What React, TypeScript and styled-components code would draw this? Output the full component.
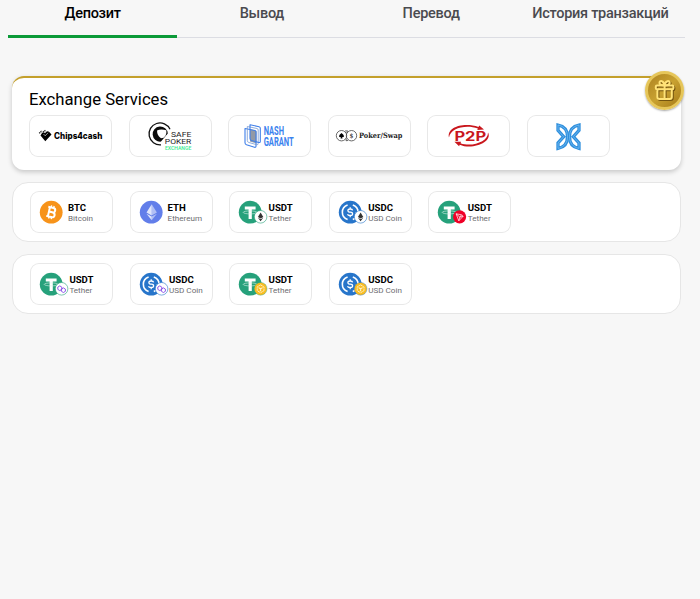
import React from "react";
import styled, { createGlobalStyle } from "styled-components";

const GlobalStyle = createGlobalStyle`
  *, *::before, *::after { box-sizing: border-box; }
  body { margin: 0; background: #f7f7f7; font-family: Roboto, sans-serif; color: #000; }
`;

const Page = styled.main`
  min-height: 599px;
  overflow: hidden;
`;

const Tabs = styled.nav`
  display: grid;
  grid-template-columns: repeat(4, 1fr);
  width: 677px;
  height: 38px;
  margin-left: 8px;
  box-shadow: inset 0 -1px #dcdde3;
`;

const Tab = styled.button<{ $active?: boolean }>`
  display: flex;
  justify-content: center;
  padding: 4px 0 0;
  border: 0;
  border-bottom: 3px solid ${(p) => (p.$active ? "#0b9a38" : "transparent")};
  background: none;
  color: ${(p) => (p.$active ? "#000" : "#4a4a4f")};
  font: 500 14.5px/20px Roboto, sans-serif;
  letter-spacing: -0.27px;
  white-space: nowrap;
`;

const Cards = styled.div`
  display: flex;
  flex-direction: column;
  width: 669px;
  margin: 38px 0 0 12px;
`;

const ExchangeCard = styled.section`
  position: relative;
  height: 94px;
  padding: 12px 17px 0;
  border-top: 2px solid #c4a02c;
  border-radius: 12px;
  background: #fff;
  box-shadow: 0 2px 5px rgba(0, 0, 0, 0.2);
`;

const Title = styled.h2`
  height: 20px;
  margin: 0 0 5px;
  font: 400 16.7px/20px Roboto, sans-serif;
`;

const CoinCard = styled.section`
  height: 60px;
  margin-top: 12px;
  padding: 8px 17px 0;
  border: 1px solid #e6e6e6;
  border-radius: 16px;
  background: #fff;
`;

const Row = styled.div`
  display: flex;
  gap: 16.6px;
`;

const Tile = styled.div`
  display: flex;
  flex: none;
  width: 83px;
  height: 42px;
  border-radius: 9px;
  background: #fff;
  box-shadow: inset 0 0 0 1px #e8e8e8;
`;

const Logo = styled.svg`
  display: block;
  width: 83px;
  height: 42px;
`;

const CoinIcon = styled.svg`
  flex: none;
  width: 39px;
  height: 42px;
`;

const CoinText = styled.div<{ $shift: number }>`
  display: flex;
  flex-direction: column;
  padding-top: 11px;
  margin-left: ${(p) => p.$shift}px;
  white-space: nowrap;
`;

const Symbol = styled.strong`
  font: 700 9.6px/11px Roboto, sans-serif;
`;

const CoinName = styled.span`
  color: #6c6c70;
  font: 400 8.1px/10px Roboto, sans-serif;
`;

const GiftBadge = styled.div`
  position: absolute;
  top: -7px;
  right: -3px;
  display: grid;
  place-items: center;
  width: 39px;
  height: 39px;
  border: 3px solid #e6c65a;
  border-radius: 50%;
  background: linear-gradient(135deg, #ae8320, #c8a131 50%, #a67a18);
  box-shadow: 0 1px 2px rgba(0, 0, 0, 0.35);
`;

const Gift = () => (
  <svg width="22" height="23" viewBox="0 0 22 23" fill="none" strokeLinejoin="round">
    {[{ c: "#74540f", t: "translate(1 1)" }, { c: "#ffe378", t: "" }].map((l) => (
      <g key={l.c} stroke={l.c} strokeWidth="2" transform={l.t}>
        <rect x="1.800" y="6.500" width="17.600" height="3.800" rx="1.200" />
        <path d="M3.400 10.500V18q0 2 2 2h10.400q2 0 2-2v-7.500M10.600 6.500V20" />
        <path d="M10.600 6.300Q5.500 6.300 5.500 3.900C5.500 1.200 9.700 1.200 10.600 6.300 11.500 1.200 15.700 1.200 15.700 3.900 15.700 6.300 10.600 6.300 10.600 6.300Z" />
      </g>
    ))}
  </svg>
);

const Chips4cash = () => (
  <Logo viewBox="0 0 83 42">
    <path d="M11.500 20.400 13 18q1.500-1.500 3 .2 2-3.200 4.300-1.200l2.200 2.500-6.200 6.800Z" />
    <path d="m10.200 18.200 2.800-2.300M14 17l2.600-1.700" stroke="#222" strokeWidth="1.400" strokeDasharray="1.200 .5" />
    <path d="m14.500 19 1.700 1.800 2.800-3" fill="none" stroke="#fff" strokeWidth=".6" />
    <text x="25" y="24.200" fontFamily="Inter" fontWeight="800" fontSize="8.600" textLength="48.300" lengthAdjust="spacingAndGlyphs">Chips4cash</text>
  </Logo>
);

const SafePoker = () => (
  <Logo viewBox="0 0 83 42">
    <path d="M32 29.900A11 11 0 1 1 41 14.300" fill="none" stroke="#111" strokeWidth="1.300" />
    <path d="M32 26.600A7.600 7.600 0 1 1 38.800 18.500" fill="#0b0b0b" />
    <path d="M28 15.500q4-2 9.300-.2.600 3-.8 5.500-1.500 2.500-4.500 2.500Q28 20.500 28 15.500Z" fill="#fff" />
    <g fill="#222" fontFamily="Roboto" fontWeight="400" fontSize="7.900">
      <text x="42" y="22" textLength="20.300" lengthAdjust="spacingAndGlyphs">SAFE</text>
      <text x="35.800" y="29.300" textLength="26.500" lengthAdjust="spacingAndGlyphs">POKER</text>
    </g>
    <text x="36" y="34.500" fill="#35ec8d" fontFamily="Roboto" fontWeight="500" fontSize="5.400" textLength="26.300" lengthAdjust="spacingAndGlyphs">EXCHANGE</text>
  </Logo>
);

const NashGarant = () => (
  <Logo viewBox="0 0 83 42">
    <path d="M22 14 28.500 16v12.500l-6.500-2Z" fill="#9299a5" />
    <g fill="none" stroke="#3f7fe9" strokeWidth="1.100" strokeLinejoin="round">
      <path d="M17 13.500 27 15.500q1 .3 1 1.300V31q0 1.600-1.500 1.300l-8-2.500Q17 29.200 17 27.700Z" />
      <path d="M19.300 11.500 29 13.500q1.200.3 1.200 1.500v13.500q0 1.500-1.500 1.200l-7.900-2.200q-1.500-.5-1.500-2Z" stroke="#7598d2" strokeWidth=".8" />
      <path d="m22 9.700 9 2q1.300.3 1.300 1.500v13q0 1.600-1.500 1.300l-7.300-2Q22 25.100 22 23.600Z" />
    </g>
    <g fill="#3b82ee" fontFamily="Roboto" fontWeight="700" fontSize="12">
      <text x="35.700" y="20.300" textLength="20.300" lengthAdjust="spacingAndGlyphs">NASH</text>
      <text x="35.700" y="31.200" textLength="30" lengthAdjust="spacingAndGlyphs">GARANT</text>
    </g>
  </Logo>
);

const PokerSwap = () => (
  <Logo viewBox="0 0 83 42">
    <g fill="none" stroke="#444" strokeWidth=".8">
      <circle cx="13.500" cy="20.700" r="5.200" />
      <circle cx="23.500" cy="20.700" r="5.200" />
      <path d="m17 16 2.500-.2-.8 2.300M20 25.500l-2 .2.300-2" />
    </g>
    <path d="M13.500 18q2.500 2 2.500 3.200-.4 1.300-2 .9l.5 1.300h-2l.5-1.300q-1.600.4-2-.9 0-1.200 2.500-3.200Z" />
    <text x="21.600" y="23.300" fontFamily="DejaVu Serif" fontWeight="700" fontSize="6.600" textLength="3.900" lengthAdjust="spacingAndGlyphs" fill="#444">$</text>
    <text x="31" y="23.300" fontFamily="DejaVu Serif" fontWeight="700" fontSize="7.300" textLength="43.300" lengthAdjust="spacingAndGlyphs" fill="#222">Poker/Swap</text>
  </Logo>
);

const P2P = () => (
  <Logo viewBox="0 0 83 42">
    <g fill="#c9171d">
      <path d="M22 22.500C19.500 12 37 7 51.500 12l.7-1.500 4.800 4-6.700.4.600-1.400C38 9.300 23.500 13.500 22 22.500Z" />
      <path d="M61 17.500c5 9.500-15.500 17.800-28.300 12.200l-.6 1.500-4.700-4.400 6.700-.1-.6 1.500C45 32.500 61.500 26.500 61 17.500Z" />
      <text x="27.400" y="26" fontFamily="Inter" fontWeight="700" fontSize="13" textLength="31.800" lengthAdjust="spacingAndGlyphs">P2P</text>
    </g>
  </Logo>
);

const Butterfly = () => (
  <Logo viewBox="0 0 83 42">
    {[{ c: "#2f8fdd", w: 3.3 }, { c: "#8acbf8", w: 0.6 }].map((s) => (
      <g key={s.c} fill="none" stroke={s.c} strokeWidth={s.w}>
        <path d="M31 10C37.500 11.200 40.500 16 40.500 21.700S37.500 32.200 31 33.400V28L36.700 21.700 31 15.400Z" />
        <path d="M52 10C45.500 11.200 42.500 16 42.500 21.700S45.500 32.200 52 33.400V28L46.300 21.700 52 15.400Z" />
      </g>
    ))}
  </Logo>
);

type Token = "btc" | "eth" | "usdt" | "usdc";
type Network = "eth" | "tron" | "polygon" | "bnb";

const tokenColor: Record<Token, string> = { btc: "#f7931a", eth: "#627eea", usdt: "#26a17b", usdc: "#2775ca" };

const TokenMark = ({ token }: { token: Token }) => {
  if (token === "btc")
    return (
      <g fill="none" stroke="#fff" strokeWidth="2" transform="rotate(13)">
        <path d="M-2.300-5V5M-4-4.600H1.200Q3.500-4.600 3.500-2.300T1-.1H-2.300M1-.1Q4-.1 4 2.500T1 4.700H-4" />
        <path d="M-1.100-6.700v2.200M1.500-6.700v2.200M-1.100 4.500v2.200M1.500 4.500v2.200" strokeWidth="1.400" />
      </g>
    );
  if (token === "eth")
    return (
      <g>
        <path d="m.5-8-5.200 8.300L.5 3.200Z" fill="#fff" opacity=".8" />
        <path d="m.5-8 5.200 8.300L.5 3.200Z" fill="#fff" opacity=".5" />
        <path d="m-4.700 1.500 5.200 6.500V4.300Z" fill="#fff" opacity=".8" />
        <path d="m5.700 1.500-5.200 6.500V4.300Z" fill="#fff" opacity=".5" />
      </g>
    );
  if (token === "usdt")
    return (
      <g>
        <path d="M-5.400-5.800H5.400v3H1.600V6.700h-3.200v-9.500h-3.800Z" fill="#fff" />
        <ellipse cx="0" cy=".2" rx="7" ry="1.500" fill="none" stroke="#d8f1e9" strokeWidth=".6" />
      </g>
    );
  return (
    <g fill="none" stroke="#fff">
      <path d="M-2.600-7.300a7.700 7.700 0 0 0 0 14.600M2.600-7.300a7.700 7.700 0 0 1 0 14.600" strokeWidth="1.600" />
      <path d="M2.400-1.900Q2.200-3.200 0-3.200-2.300-3.200-2.300-1.600T0 0 2.400 1.700 0 3.300-2.400 1.900M0-5v1.800M0 3.200V5" strokeWidth="1.300" />
    </g>
  );
};

const NetworkMark = ({ network, ring }: { network: Network; ring: string }) => {
  if (network === "tron")
    return (
      <g>
        <circle r="6.600" fill="#ef0027" />
        <path d="M-3.500-3 2-2 3.500-.5-.8 4ZM-3.500-3 .2.3 3.500-.5M.2.300-.8 4M.2.300 2-2" fill="none" stroke="#fff" strokeWidth=".7" strokeLinejoin="round" />
      </g>
    );
  if (network === "bnb")
    return (
      <g>
        <circle r="6.400" fill="#f9bd22" stroke={ring} strokeWidth=".4" />
        <path d="m0-3.900 3.400 2v3.800L0 3.900l-3.400-2v-3.800Z" fill="none" stroke="#fff3cf" strokeWidth=".9" strokeDasharray="2.500 .6" />
        <path d="m-2-1.200 2 1.200 2-1.200M0 0v2.500" fill="none" stroke="#fff3cf" strokeWidth="1.100" />
      </g>
    );
  return (
    <g>
      <circle r="6.300" fill="#fff" stroke={ring} strokeWidth=".6" />
      {network === "eth" ? (
        <>
          <path d="m0-4.300-2.700 4.500L0 1.800 2.700.2Z" fill="#333" />
          <path d="M-2.600 1 0 4.500 2.600 1 0 2.500Z" fill="#222" />
        </>
      ) : (
        <path d="m-1.800-2.900 2 1.200v2.300l-2 1.200-2-1.200v-2.300ZM1.800-.9l2 1.200v2.200l-2 1.200-2-1.200V.3Z" fill="none" stroke="#8247e5" strokeWidth=".9" strokeLinejoin="round" />
      )}
    </g>
  );
};

interface CoinData {
  token: Token;
  symbol: string;
  name: string;
  network?: Network;
}

const Coin = ({ token, symbol, name, network }: CoinData) => (
  <Tile>
    <CoinIcon viewBox="0 0 39 42">
      <g transform="translate(21.200 21.200)">
        <circle r="11.400" fill={tokenColor[token]} />
        <TokenMark token={token} />
      </g>
      {network && (
        <g transform="translate(31.600 25.800)">
          <NetworkMark network={network} ring={tokenColor[token]} />
        </g>
      )}
    </CoinIcon>
    <CoinText $shift={network ? 0.4 : -1}>
      <Symbol>{symbol}</Symbol>
      <CoinName>{name}</CoinName>
    </CoinText>
  </Tile>
);

const firstRow: CoinData[] = [
  { token: "btc", symbol: "BTC", name: "Bitcoin" },
  { token: "eth", symbol: "ETH", name: "Ethereum" },
  { token: "usdt", symbol: "USDT", name: "Tether", network: "eth" },
  { token: "usdc", symbol: "USDC", name: "USD Coin", network: "eth" },
  { token: "usdt", symbol: "USDT", name: "Tether", network: "tron" },
];

const secondRow: CoinData[] = [
  { token: "usdt", symbol: "USDT", name: "Tether", network: "polygon" },
  { token: "usdc", symbol: "USDC", name: "USD Coin", network: "polygon" },
  { token: "usdt", symbol: "USDT", name: "Tether", network: "bnb" },
  { token: "usdc", symbol: "USDC", name: "USD Coin", network: "bnb" },
];

const services = [Chips4cash, SafePoker, NashGarant, PokerSwap, P2P, Butterfly];

export default function App() {
  return (
    <Page>
      <GlobalStyle />
      <Tabs>
        <Tab $active>Депозит</Tab>
        <Tab>Вывод</Tab>
        <Tab>Перевод</Tab>
        <Tab>История транзакций</Tab>
      </Tabs>
      <Cards>
        <ExchangeCard>
          <Title>Exchange Services</Title>
          <Row>
            {services.map((Service, i) => (
              <Tile key={i}>
                <Service />
              </Tile>
            ))}
          </Row>
          <GiftBadge>
            <Gift />
          </GiftBadge>
        </ExchangeCard>
        {[firstRow, secondRow].map((coins, i) => (
          <CoinCard key={i}>
            <Row>
              {coins.map((coin, j) => (
                <Coin key={j} {...coin} />
              ))}
            </Row>
          </CoinCard>
        ))}
      </Cards>
    </Page>
  );
}
